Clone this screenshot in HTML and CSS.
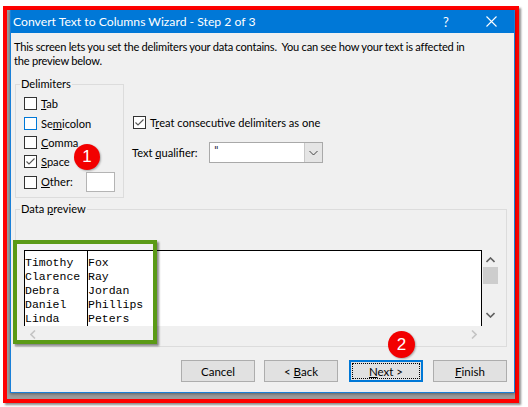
FILE: index.html
```html
<!DOCTYPE html>
<html>
<head>
<meta charset="utf-8">
<link rel="stylesheet" href="styles.css">
</head>
<body>
<div class="frame">
  <div class="window">
    <div class="titlebar">
      <span class="title">Convert Text to Columns Wizard - Step 2 of 3</span>
      <span class="help">?</span>
      <span class="close"><svg width="11" height="11" viewBox="0 0 11 11"><path d="M0.5 0.5L10.5 10.5M10.5 0.5L0.5 10.5" stroke="#fff" stroke-width="1.1" fill="none"/></svg></span>
    </div>
    <div class="body">
      <p class="intro">This screen lets you set the delimiters your data contains.&nbsp; You can see how your text is affected in<br>the preview below.</p>
      <div class="top-row">
        <fieldset class="group delims">
          <legend>Delimiters</legend>
          <div class="check"><span class="box"></span><span class="lbl"><u>T</u>ab</span></div>
          <div class="check gap"><span class="box focus"></span><span class="lbl">Se<u>m</u>icolon</span></div>
          <div class="check"><span class="box"></span><span class="lbl"><u>C</u>omma</span></div>
          <div class="check"><span class="box"><svg width="11" height="11" viewBox="0 0 11 11"><path d="M1.5 5.5L4 8L9.5 2.5" stroke="#555" stroke-width="1.1" fill="none"/></svg></span><span class="lbl"><u>S</u>pace</span></div>
          <div class="check gap tall"><span class="box"></span><span class="lbl"><u>O</u>ther:</span><span class="other-input"></span></div>
        </fieldset>
        <div class="options">
          <div class="check treat"><span class="box"><svg width="11" height="11" viewBox="0 0 11 11"><path d="M1.5 5.5L4 8L9.5 2.5" stroke="#555" stroke-width="1.1" fill="none"/></svg></span><span class="lbl">T<u>r</u>eat consecutive delimiters as one</span></div>
          <div class="qualifier">
            <span class="qlabel">Text <u>q</u>ualifier:</span>
            <div class="combo">
              <span class="combo-value">"</span>
              <span class="combo-btn"><svg width="9" height="6" viewBox="0 0 9 6"><path d="M0.5 1L4.5 5L8.5 1" stroke="#444" stroke-width="1" fill="none"/></svg></span>
            </div>
          </div>
        </div>
      </div>
      <fieldset class="group preview">
        <legend>Data <u>p</u>review</legend>
        <div class="preview-grid">
          <div class="list">
            <div class="col col-1">Timothy<br>Clarence<br>Debra<br>Daniel<br>Linda</div>
            <div class="col col-2">Fox<br>Ray<br>Jordan<br>Phillips<br>Peters</div>
          </div>
          <div class="vscroll">
            <svg class="arrow-up" width="9" height="6" viewBox="0 0 9 6"><path d="M0.5 5L4.5 1L8.5 5" stroke="#606060" stroke-width="1.6" fill="none"/></svg>
            <span class="thumb"></span>
            <svg class="arrow-down" width="9" height="6" viewBox="0 0 9 6"><path d="M0.5 1L4.5 5L8.5 1" stroke="#606060" stroke-width="1.6" fill="none"/></svg>
          </div>
          <div class="hscroll">
            <svg width="6" height="9" viewBox="0 0 6 9"><path d="M5 0.5L1 4.5L5 8.5" stroke="#c4c4c4" stroke-width="1.6" fill="none"/></svg>
            <svg width="6" height="9" viewBox="0 0 6 9"><path d="M1 0.5L5 4.5L1 8.5" stroke="#c4c4c4" stroke-width="1.6" fill="none"/></svg>
          </div>
          <div class="corner"></div>
        </div>
      </fieldset>
      <div class="buttons">
        <span class="btn btn-cancel"><span>Cancel</span></span>
        <span class="btn btn-back"><span>&lt; <u>B</u>ack</span></span>
        <span class="btn btn-next"><span class="focus-ring"><span><u>N</u>ext &gt;</span></span></span>
        <span class="btn btn-finish"><span><u>F</u>inish</span></span>
      </div>
    </div>
  </div>
  <div class="highlight"></div>
  <div class="badge badge-1">1</div>
  <div class="badge badge-2">2</div>
</div>
</body>
</html>
```

FILE: styles.css
```css
* { box-sizing: border-box; }

html, body {
  margin: 0;
  padding: 0;
  background: #ffffff;
}

body {
  font-family: Lato, "Liberation Sans", Arial, sans-serif;
  font-size: 11.1px;
  color: #000;
  width: 528px;
  height: 407px;
  overflow: hidden;
}

u { text-decoration: underline; text-underline-offset: 1px; }

.frame {
  position: relative;
  margin: 6px 0 0 3px;
  width: 516px;
  height: 397px;
  border: 4px solid #ff0000;
  padding: 0 0 5px 3px;
  background: #9c9c9c;
  box-shadow: 2px 2px 2px rgba(0, 0, 0, 0.45);
}

.window {
  width: 505px;
  height: 383px;
  background: #f0f0f0;
  border: 1px solid #1a80d8;
  border-top: none;
  box-shadow: 0 1px 3px rgba(0, 0, 0, 0.4);
}

.titlebar {
  display: flex;
  align-items: center;
  height: 23px;
  background: #0078d7;
  color: #fff;
}

.title {
  flex: 1;
  padding-left: 2px;
  font-size: 12.2px;
  white-space: nowrap;
}

.help {
  width: 30px;
  margin-right: 7px;
  text-align: center;
  font-size: 13px;
}

.close {
  width: 46px;
  display: flex;
  justify-content: center;
  align-items: center;
}

.body {
  padding: 0 0 0 3px;
}

.intro {
  margin: 7px 0 0 0;
  line-height: 14px;
  white-space: nowrap;
  letter-spacing: -0.24px;
}

.top-row {
  display: flex;
  margin-top: 9px;
}

.group {
  margin: 0;
  min-width: 0;
  border: 1px solid #dcdcdc;
  line-height: 14px;
}

.group legend {
  padding: 0 1px;
  line-height: 14px;
}

.delims {
  width: 109px;
  margin-left: 1px;
  padding: 3px 4px 5px 4px;
}

.check {
  display: flex;
  align-items: center;
  height: 19px;
  white-space: nowrap;
}

.check.gap { margin-top: 1px; }
.check.tall { height: 20px; }

.box {
  width: 13px;
  height: 13px;
  margin-left: 4px;
  border: 1px solid #333;
  background: #fff;
  display: flex;
  align-items: center;
  justify-content: center;
  flex: none;
}

.box.focus { border-color: #0078d7; }

.lbl { margin-left: 4px; }

.other-input {
  width: 29px;
  height: 20px;
  margin-left: auto;
  margin-right: 4px;
  background: #fff;
  border: 1px solid #b4b4b4;
}

.options {
  margin-left: 9px;
  padding-top: 36px;
}

.treat .box { margin-left: 0; }

.qualifier {
  display: flex;
  align-items: center;
  margin-top: 10px;
  margin-left: -1px;
}

.qlabel {
  width: 77px;
  white-space: nowrap;
}

.combo {
  display: flex;
  width: 114px;
  height: 21px;
  border: 1px solid #a9a9a9;
  background: #fff;
}

.combo-value {
  flex: 1;
  padding: 2px 0 0 4px;
  font-family: "DejaVu Sans", sans-serif;
  font-size: 10px;
  line-height: 12px;
  color: #1a1a3a;
}

.combo-btn {
  width: 18px;
  background: #e5e5e5;
  border-left: 1px solid #c8c8c8;
  display: flex;
  align-items: center;
  justify-content: center;
}

.preview {
  width: 492px;
  margin-top: 4px;
  margin-left: 1px;
  padding: 34px 4px 4px 4px;
}

.preview-grid {
  display: grid;
  grid-template-columns: 458px 17px;
  grid-template-rows: 76px 16px;
  margin-left: 4px;
}

.list {
  display: flex;
  background: #fff;
  border-top: 1px solid #000;
  border-left: 1px solid #000;
  border-right: 1px solid #000;
  padding-top: 5px;
  overflow: hidden;
  font-family: "Liberation Mono", "Courier New", monospace;
  font-size: 11.5px;
  line-height: 14px;
  color: #000;
}

.col { white-space: nowrap; }

.col-1 {
  width: 63px;
  border-right: 1px solid #000;
  margin-top: -5px;
  padding-top: 5px;
}

.vscroll {
  display: flex;
  flex-direction: column;
  align-items: center;
  padding-top: 7px;
}

.thumb {
  display: block;
  width: 15px;
  height: 17px;
  margin-top: 4px;
  background: #cdcdcd;
}

.arrow-down { margin-top: 28px; }

.hscroll {
  display: flex;
  align-items: center;
  justify-content: space-between;
  padding: 0 5px 0 6px;
}

.buttons {
  display: flex;
  justify-content: flex-end;
  margin-top: 13px;
  margin-right: 7px;
}

.btn {
  width: 74px;
  height: 22px;
  display: flex;
  align-items: center;
  justify-content: center;
  background: #e1e1e1;
  border: 1px solid #adadad;
  white-space: nowrap;
  font-size: 11.5px;
}

.btn-back { margin-left: 9px; }

.btn-next {
  margin-left: 11px;
  border: 2px solid #0078d7;
  padding: 1px;
}

.btn-finish { margin-left: 10px; }

.focus-ring {
  width: 100%;
  height: 100%;
  display: flex;
  align-items: center;
  justify-content: center;
  border: 1px dotted #000;
}

.highlight {
  position: absolute;
  left: 6px;
  top: 230px;
  width: 144px;
  height: 104px;
  border: 4px solid #5a9a16;
  box-shadow: 2px 2px 2px rgba(0, 0, 0, 0.45);
}

.badge {
  position: absolute;
  border-radius: 50%;
  background: #f20000;
  color: #fff;
  font-family: "Liberation Sans", Arial, sans-serif;
  font-size: 17px;
  display: flex;
  align-items: center;
  justify-content: center;
  box-shadow: 1px 1px 2px rgba(0, 0, 0, 0.3);
}

.badge-1 {
  left: 67px;
  top: 134px;
  width: 26px;
  height: 26px;
}

.badge-2 {
  left: 381px;
  top: 321px;
  width: 27px;
  height: 27px;
}
```
